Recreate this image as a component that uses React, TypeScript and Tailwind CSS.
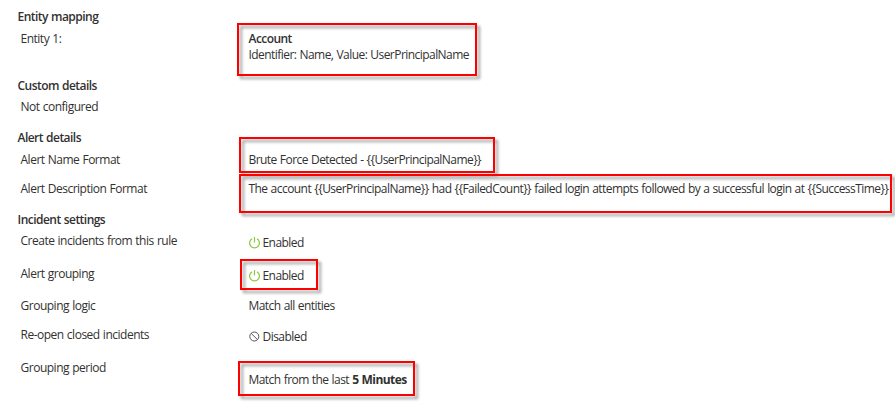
import type { ReactNode } from "react";

function Highlight({ className }: { className: string }) {
  return (
    <span
      className={`pointer-events-none absolute border-2 border-[#ff0000] drop-shadow-[3px_3px_1.5px_rgba(0,0,0,0.4)] ${className}`}
    />
  );
}

function Heading({ className, children }: { className: string; children: ReactNode }) {
  return <h2 className={`pl-[17.5px] font-semibold tracking-[-0.53px] ${className}`}>{children}</h2>;
}

function Row({
  label,
  className,
  valueClass = "",
  children,
}: {
  label: string;
  className: string;
  valueClass?: string;
  children?: ReactNode;
}) {
  return (
    <div className={`flex pl-[20.5px] ${className}`}>
      <div className="w-[228px] shrink-0 tracking-[-0.49px]">{label}</div>
      <div className={`relative self-start ${valueClass}`}>{children}</div>
    </div>
  );
}

function PowerIcon() {
  return (
    <svg className="h-3 w-3 shrink-0" viewBox="0 0 12 12" fill="none" stroke="#8cc63f" strokeWidth="1.2">
      <path d="M3.1 1.7A4.9 4.9 0 1 0 7.9 1.7M5.5 0V5.5" />
    </svg>
  );
}

function BlockedIcon() {
  return (
    <svg className="h-3 w-3 shrink-0" viewBox="0 0 12 12" fill="none" stroke="#555" strokeWidth="1">
      <circle cx="5.3" cy="5.5" r="4.5" />
      <path d="M2.1 2.3L8.5 8.7" />
    </svg>
  );
}

export default function App() {
  return (
    <main className="h-[407px] w-[895px] overflow-hidden bg-white pt-[9px] font-['Open_Sans','Noto_Sans',sans-serif] text-[12px] leading-4 tracking-[-0.55px] [word-spacing:0.5px] whitespace-nowrap text-[#323130]">
      <Heading className="h-[22px]">Entity mapping</Heading>
      <Row label="Entity 1:" className="h-[47px]">
        <div className="font-semibold">Account</div>
        <div>Identifier: Name, Value: UserPrincipalName</div>
        <Highlight className="-top-2 -left-[11.5px] h-[53px] w-[240px]" />
      </Row>
      <Heading className="h-[21px]">Custom details</Heading>
      <Row label="Not configured" className="h-[31px]" />
      <Heading className="h-[22px]">Alert details</Heading>
      <Row label="Alert Name Format" className="h-[29px]">
        Brute Force Detected - {"{{UserPrincipalName}}"}
        <Highlight className="-top-[15px] -left-[9.5px] h-9 w-[256px]" />
      </Row>
      <Row label="Alert Description Format" className="h-[31px]">
        The account {"{{UserPrincipalName}}"} had {"{{FailedCount}}"} failed login attempts followed by a successful login at {"{{SuccessTime}}"}
        <Highlight className="-top-[7px] -left-[9.5px] h-[39px] w-[653px]" />
      </Row>
      <Heading className="h-[21px]">Incident settings</Heading>
      <Row label="Create incidents from this rule" className="h-[33px]" valueClass="mt-0.5 flex items-center gap-0.5">
        <PowerIcon />
        <span>Enabled</span>
      </Row>
      <Row label="Alert grouping" className="h-8" valueClass="mt-0.5 flex items-center gap-0.5">
        <PowerIcon />
        <span>Enabled</span>
        <Highlight className="-top-[9px] -left-[8.5px] h-[31px] w-[78px]" />
      </Row>
      <Row label="Grouping logic" className="h-[29px]">
        Match all entities
      </Row>
      <Row label="Re-open closed incidents" className="h-[33px]" valueClass="mt-0.5 flex items-center gap-0.5">
        <BlockedIcon />
        <span>Disabled</span>
      </Row>
      <Row label="Grouping period" className="h-8" valueClass="mt-3">
        Match from the last <b>5 Minutes</b>
        <Highlight className="-top-[11px] -left-[10.5px] h-[35px] w-[177px]" />
      </Row>
    </main>
  );
}
